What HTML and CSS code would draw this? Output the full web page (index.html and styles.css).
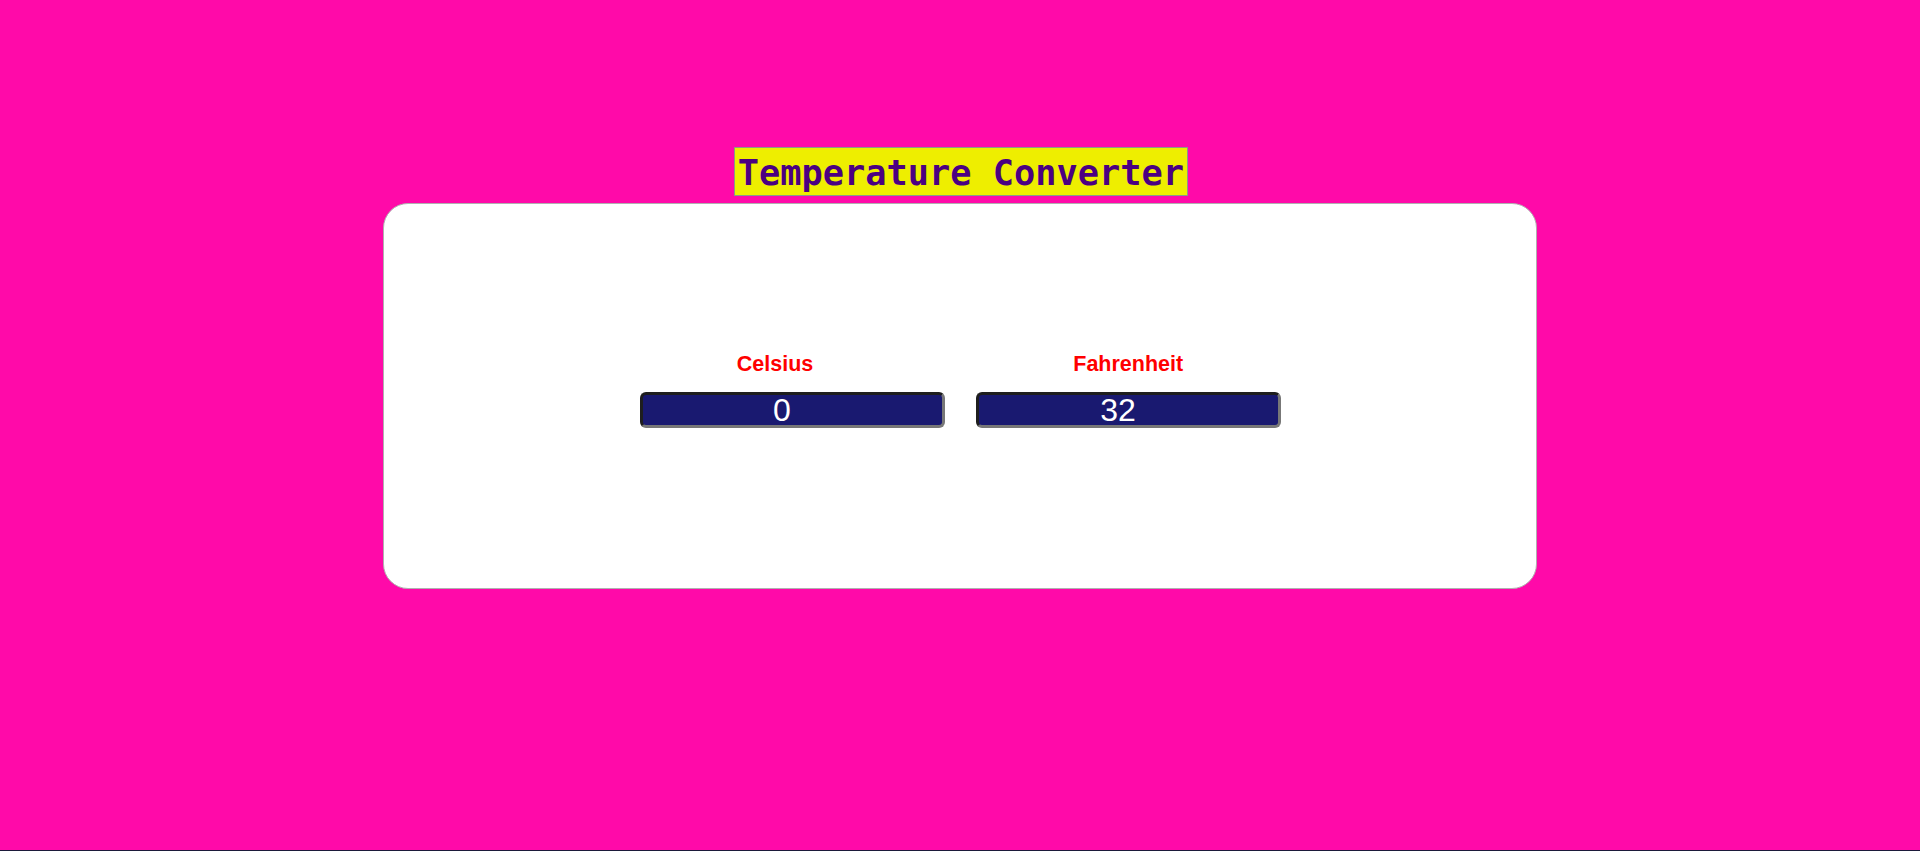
FILE: index.html
```html
<!DOCTYPE html>
<html lang="en">
<head>
<meta charset="utf-8">
<title>Temperature Converter</title>
<link rel="stylesheet" href="styles.css">
</head>
<body>
<main class="page">
  <h1 class="title">Temperature Converter</h1>
  <section class="card">
    <div class="labels">
      <label class="label" for="celsius">Celsius</label>
      <label class="label" for="fahrenheit">Fahrenheit</label>
    </div>
    <div class="inputs">
      <input class="temp" id="celsius" type="text" value="0">
      <input class="temp" id="fahrenheit" type="text" value="32">
    </div>
  </section>
</main>
</body>
</html>
```

FILE: styles.css
```css
html, body {
  margin: 0;
  padding: 0;
}

body {
  background: #ff0aa9;
}

.page {
  box-sizing: border-box;
  min-height: 851px;
  padding-top: 147px;
  display: flex;
  flex-direction: column;
  align-items: center;
  border-bottom: 1px solid #1c1a3a;
}

.title {
  margin: 0 0 0 2px;
  padding: 4px 3px 2px;
  background: #eeee00;
  border: 1px solid #8a9a88;
  color: #4b0082;
  font-family: "DejaVu Sans Mono", monospace;
  font-weight: 700;
  font-size: 35.3px;
  line-height: 41px;
  white-space: nowrap;
}

.card {
  box-sizing: border-box;
  margin-top: 7px;
  width: 1154px;
  height: 386px;
  background: #ffffff;
  border: 1px solid #b0b0b0;
  border-radius: 25px;
  padding-top: 148px;
  display: flex;
  flex-direction: column;
  align-items: center;
}

.labels {
  display: flex;
  justify-content: center;
  gap: 260px;
}

.label {
  color: #ff0000;
  font-family: "Liberation Sans", Arial, sans-serif;
  font-weight: 700;
  font-size: 21.5px;
  line-height: 25px;
}

.inputs {
  margin-top: 15px;
  display: flex;
  justify-content: center;
  gap: 31px;
}

.temp {
  box-sizing: border-box;
  width: 305px;
  height: 36px;
  margin: 0;
  padding: 0 20px 0 0;
  background: #191970;
  color: #ffffff;
  border: 3px solid;
  border-color: #1e1e1e #777777 #777777 #1e1e1e;
  border-radius: 6px;
  font-family: "Liberation Sans", Arial, sans-serif;
  font-size: 32px;
  line-height: 30px;
  text-align: center;
  outline: none;
}
```
